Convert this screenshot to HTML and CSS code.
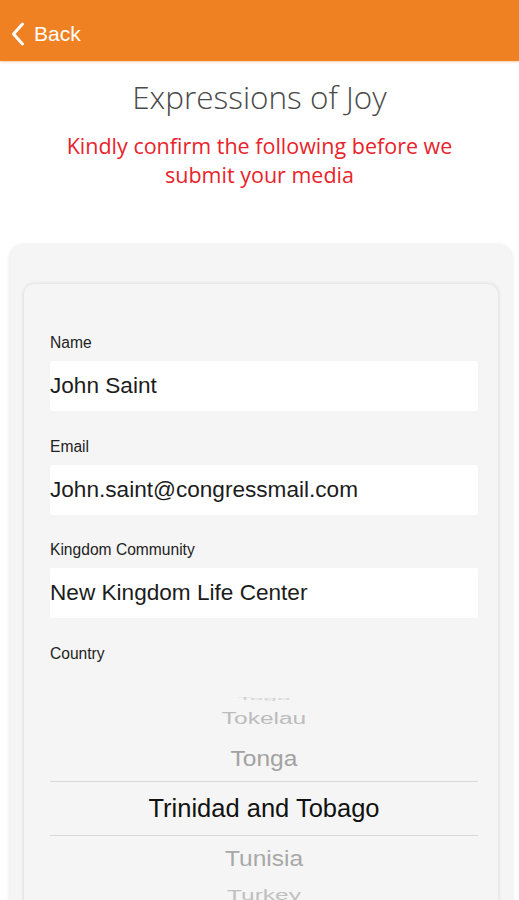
FILE: index.html
```html
<!DOCTYPE html>
<html>
<head>
<meta charset="utf-8">
<link rel="stylesheet" href="styles.css">
</head>
<body>
<header class="topbar">
  <a class="back">
    <svg class="chev" width="14" height="24" viewBox="0 0 14 24"><path d="M11.5 2 L2.5 12 L11.5 22" fill="none" stroke="#fff" stroke-width="3" stroke-linecap="round" stroke-linejoin="round"/></svg>
    <span>Back</span>
  </a>
</header>
<main class="content">
  <h1 class="title">Expressions of Joy</h1>
  <p class="notice">Kindly confirm the following before we<br>submit your media</p>
  <section class="outer">
    <div class="inner">
      <div class="field">
        <label class="label">Name</label>
        <div class="input">John Saint</div>
      </div>
      <div class="field">
        <label class="label">Email</label>
        <div class="input">John.saint@congressmail.com</div>
      </div>
      <div class="field">
        <label class="label">Kingdom Community</label>
        <div class="input">New Kingdom Life Center</div>
      </div>
      <div class="field">
        <label class="label">Country</label>
        <div class="picker">
          <div class="opt o3"><span>Togo</span></div>
          <div class="opt o2"><span>Tokelau</span></div>
          <div class="opt o1"><span>Tonga</span></div>
          <div class="opt sel"><span>Trinidad and Tobago</span></div>
          <div class="opt o1b"><span>Tunisia</span></div>
          <div class="opt o2b"><span>Turkey</span></div>
        </div>
      </div>
    </div>
  </section>
</main>
</body>
</html>
```

FILE: styles.css
```css
html, body {
  margin: 0;
  padding: 0;
  background: #ffffff;
  height: 900px;
  overflow: hidden;
}
body {
  font-family: "Liberation Sans", Arial, sans-serif;
}
.topbar {
  height: 61px;
  background: #f08123;
  display: flex;
  align-items: center;
  padding-left: 11px;
  box-shadow: 0 1px 2px rgba(240,129,35,0.4);
}
.back {
  display: flex;
  align-items: center;
  gap: 9px;
  color: #fff;
  font-size: 21px;
  margin-top: 6px;
}
.content {
  display: flex;
  flex-direction: column;
  align-items: center;
}
.title {
  margin: 16px 0 0;
  font-family: "Open Sans", sans-serif;
  font-weight: 300;
  font-size: 31.5px;
  line-height: 40px;
  color: #4a4a4a;
}
.notice {
  margin: 14px 0 0;
  font-family: "Open Sans", sans-serif;
  font-size: 21.5px;
  line-height: 29px;
  color: #e8232b;
  text-align: center;
}
.outer {
  margin-top: 56px;
  width: 502px;
  box-sizing: border-box;
  align-self: flex-start;
  margin-left: 10px;
  background: #f5f5f5;
  border-radius: 14px;
  box-shadow: 0 0 4px rgba(0,0,0,0.12);
  padding: 39px 14px 0;
  height: 700px;
}
.inner {
  background: #f5f5f5;
  border-radius: 10px;
  box-shadow: 0 0 4px rgba(0,0,0,0.14);
  padding: 49px 20px 0 26px;
  height: 660px;
}
.field {
  display: flex;
  flex-direction: column;
  margin-bottom: 25.5px;
}
.label {
  font-size: 15.6px;
  line-height: 20px;
  color: #222;
  margin-bottom: 8px;
}
.input {
  background: #fff;
  height: 50px;
  display: flex;
  align-items: center;
  font-size: 22.6px;
  color: #1c1c1c;
  border-radius: 2px;
}
.picker {
  margin-top: 25px;
  display: flex;
  flex-direction: column;
  align-items: stretch;
  text-align: center;
  font-size: 24.5px;
}
.opt span {
  display: inline-block;
}
.o3 {
  height: 4px;
  line-height: 4px;
  color: #d0d0d0;
}
.o3 span { transform: scaleY(0.18); }
.o2 {
  height: 36px;
  line-height: 36px;
  color: #bcbcbc;
}
.o2 span { transform: scaleY(0.68); }
.o1 {
  height: 44px;
  line-height: 44px;
  color: #a2a2a2;
}
.o1 span { transform: scaleY(0.92); }
.sel {
  font-size: 25.5px;
  color: #111;
  height: 53px;
  line-height: 53px;
  border-top: 1px solid #d9d9d9;
  border-bottom: 1px solid #d9d9d9;
}
.o1b {
  height: 46px;
  line-height: 46px;
  color: #a8a8a8;
}
.o1b span { transform: scaleY(0.92); }
.o2b {
  height: 26px;
  line-height: 26px;
  color: #c0c0c0;
}
.o2b span { transform: scaleY(0.62); }
```
